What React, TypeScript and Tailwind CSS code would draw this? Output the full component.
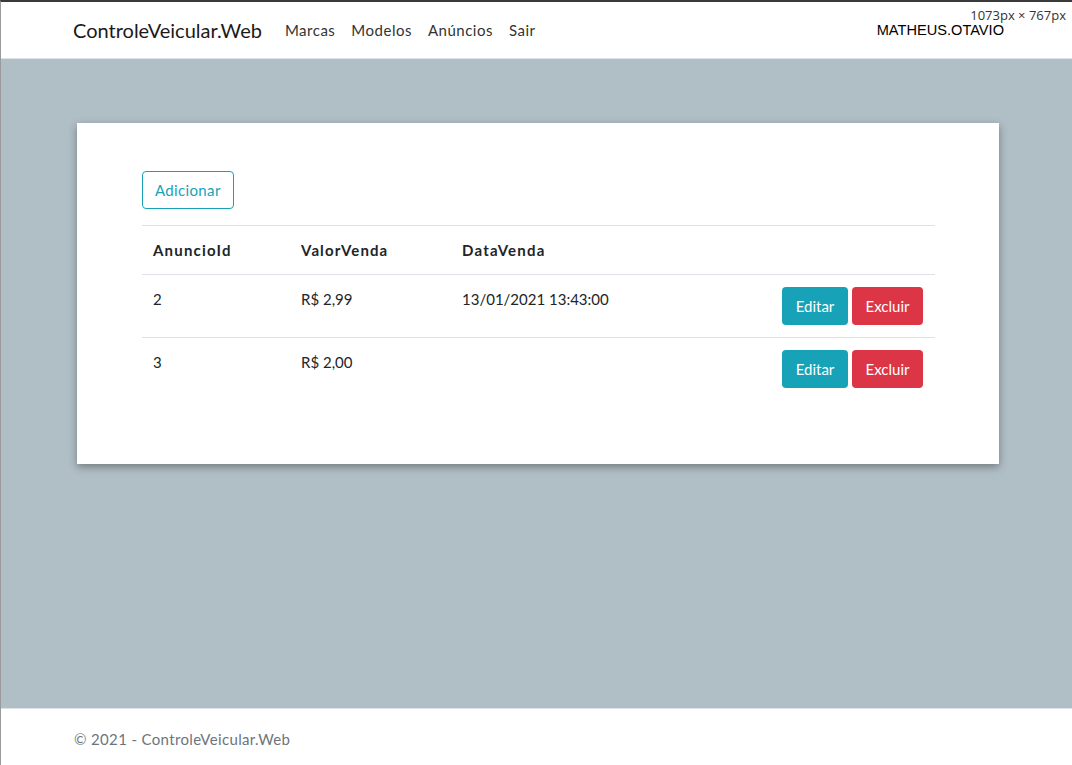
const rows = [
  { id: "2", valor: "R$ 2,99", data: "13/01/2021 13:43:00" },
  { id: "3", valor: "R$ 2,00", data: "" },
];

const navLinks = ["Marcas", "Modelos", "Anúncios", "Sair"];

function App() {
  return (
    <div
      className="relative flex h-[765px] w-full flex-col overflow-hidden border-t-2 border-l border-t-[#3a3a3a] border-l-[#9a9a9a] text-[#212529]"
      style={{ fontFamily: "Lato, 'Open Sans', sans-serif" }}
    >
      {/* overlay from the devtools */}
      <div className="absolute right-[4px] top-[5px] bg-white px-[2px] text-[13px] leading-[16px] text-[#333]" style={{ fontFamily: "'Open Sans', sans-serif" }}>
        1073px × 767px
      </div>

      <header className="flex h-[57px] shrink-0 items-center border-b border-[#dee2e6] bg-white pl-[72px] pr-[68px]">
        <span className="mr-[23px] text-[20px] text-[#1a1a1a]">ControleVeicular.Web</span>
        <nav className="flex gap-[16px] text-[15px] tracking-[0.5px] text-[#333]">
          {navLinks.map((l) => (
            <a key={l} href="#">
              {l}
            </a>
          ))}
        </nav>
        <span
          className="ml-auto pt-[1px] text-[14.6px] text-black"
          style={{ fontFamily: "'Liberation Sans', Arial, sans-serif" }}
        >
          MATHEUS.OTAVIO
        </span>
      </header>

      <main className="flex-1 bg-[#b0bec5] px-[76px] pt-[64px]">
        <div className="h-[341px] w-[922px] bg-white px-[65px] pt-[48px] shadow-[0_3px_8px_rgba(0,0,0,0.35)]">
          <button className="h-[38px] rounded-[4px] border border-[#17a2b8] px-[12px] text-[15px] tracking-[0.35px] text-[#17a2b8]">
            Adicionar
          </button>
          <table className="mt-[16px] w-[793px] border-collapse text-[15px]">
            <thead>
              <tr className="border-t border-b border-[#dee2e6]">
                <th className="w-[147px] px-[11px] py-[12px] text-left leading-[24px] font-bold tracking-[1.2px]">AnuncioId</th>
                <th className="w-[161px] px-[12px] py-[12px] text-left leading-[24px] font-bold tracking-[1.1px]">ValorVenda</th>
                <th className="px-[12px] py-[12px] text-left leading-[24px] font-bold tracking-[1.2px]">DataVenda</th>
                <th className="w-[165px]"></th>
              </tr>
            </thead>
            <tbody>
              {rows.map((r, i) => (
                <tr key={r.id} className={i === 0 ? "border-b border-[#dee2e6]" : ""}>
                  <td className="px-[11px] pt-[12px] pb-[12px] align-top leading-[24px]">{r.id}</td>
                  <td className="px-[12px] pt-[12px] pb-[12px] align-top leading-[24px]">{r.valor}</td>
                  <td className="px-[12px] pt-[12px] pb-[12px] align-top leading-[24px]">{r.data}</td>
                  <td className="px-[12px] pt-[12px] pb-[12px] align-top">
                    <div className="flex justify-end gap-[4px]">
                      <button className="h-[38px] w-[66px] rounded-[4px] bg-[#17a2b8] text-[15px] text-white">
                        Editar
                      </button>
                      <button className="h-[38px] w-[71px] rounded-[4px] bg-[#dc3545] text-[15px] text-white">
                        Excluir
                      </button>
                    </div>
                  </td>
                </tr>
              ))}
            </tbody>
          </table>
        </div>
      </main>

      <footer className="flex h-[57px] shrink-0 items-center border-t border-[#dee2e6] bg-white pl-[73px] pt-[4px] text-[15px] tracking-[0.35px] text-[#6c757d]">
        © 2021 - ControleVeicular.Web
      </footer>
    </div>
  );
}

export default App;
